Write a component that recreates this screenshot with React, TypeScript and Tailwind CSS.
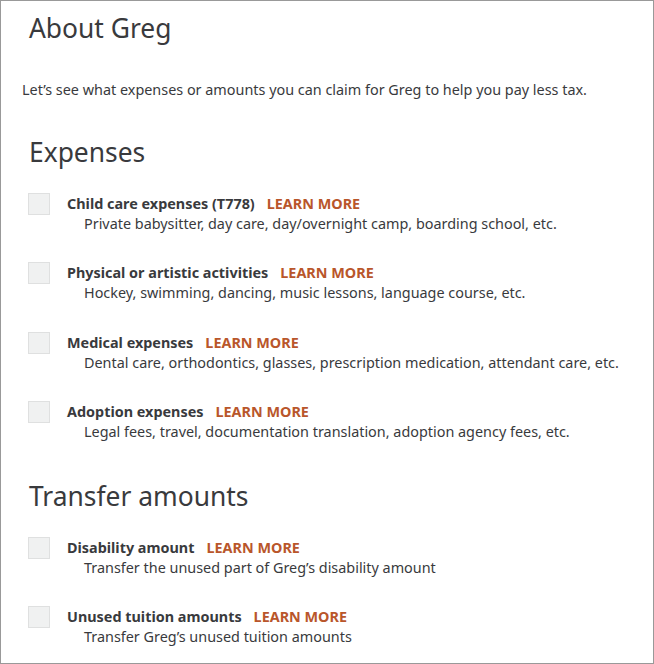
const expenses = [
  {
    title: "Child care expenses (T778)",
    desc: "Private babysitter, day care, day/overnight camp, boarding school, etc.",
  },
  {
    title: "Physical or artistic activities",
    desc: "Hockey, swimming, dancing, music lessons, language course, etc.",
  },
  {
    title: "Medical expenses",
    desc: "Dental care, orthodontics, glasses, prescription medication, attendant care, etc.",
  },
  {
    title: "Adoption expenses",
    desc: "Legal fees, travel, documentation translation, adoption agency fees, etc.",
  },
];

const transfers = [
  {
    title: "Disability amount",
    desc: "Transfer the unused part of Greg\u2019s disability amount",
  },
  {
    title: "Unused tuition amounts",
    desc: "Transfer Greg\u2019s unused tuition amounts",
  },
];

function Item({ title, desc }: { title: string; desc: string }) {
  return (
    <div className="flex items-start h-[69.4px]">
      <div className="w-[22px] h-[22px] ml-[6px] shrink-0 bg-[#f0f1f1] border border-[#dfe0e0]" />
      <div className="ml-[17px]">
        <div className="flex items-baseline leading-[21px]">
          <span className="text-[14.4px] font-bold text-[#393a3d]">{title}</span>
          <span className="ml-[12px] text-[14.4px] font-bold text-[#b9562b]">LEARN MORE</span>
        </div>
        <p className="ml-[17px] text-[14.4px] leading-[20px] text-[#393a3d]">{desc}</p>
      </div>
    </div>
  );
}

export default function App() {
  return (
    <div
      className="w-[654px] h-[664px] border border-[#999] bg-white overflow-hidden text-[#393a3d]"
      style={{ fontFamily: '"Noto Sans", sans-serif' }}
    >
      <div className="pl-[21px] pr-4 pt-[9px]">
        <h1 className="ml-[7px] text-[26.4px] leading-[36px] font-normal">About Greg</h1>
        <p className="mt-[34px] text-[14.4px] leading-[20px]">
          Let’s see what expenses or amounts you can claim for Greg to help you pay less tax.
        </p>
        <h2 className="ml-[7px] mt-[34px] text-[26.4px] leading-[36px] font-normal">Expenses</h2>
        <div className="mt-[23px]">
          {expenses.map((e) => (
            <Item key={e.title} {...e} />
          ))}
        </div>
        <h2 className="ml-[7px] mt-[7px] text-[26.4px] leading-[36px] font-normal">Transfer amounts</h2>
        <div className="mt-[23px]">
          {transfers.map((e) => (
            <Item key={e.title} {...e} />
          ))}
        </div>
      </div>
    </div>
  );
}
